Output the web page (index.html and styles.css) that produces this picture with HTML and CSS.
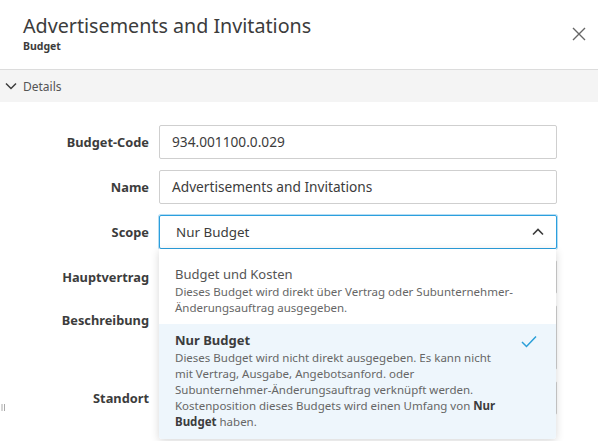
FILE: index.html
```html
<!DOCTYPE html>
<html lang="de">
<head>
<meta charset="utf-8">
<link rel="stylesheet" href="styles.css">
</head>
<body>
<div class="panel">
  <header class="header">
    <div class="titles">
      <div class="title">Advertisements and Invitations</div>
      <div class="subtitle">Budget</div>
    </div>
    <button class="close" aria-label="Close">
      <svg width="14" height="14" viewBox="0 0 14 14"><path d="M1 1L13 13M13 1L1 13" stroke="#666" stroke-width="1.4" fill="none"/></svg>
    </button>
  </header>
  <div class="section-bar">
    <svg class="chev" width="12" height="8" viewBox="0 0 12 8"><path d="M1 1.5L6 6.5L11 1.5" stroke="#3c3c3c" stroke-width="1.5" fill="none"/></svg>
    <span>Details</span>
  </div>
  <div class="form">
    <label class="label">Budget-Code</label>
    <div class="input">934.001100.0.029</div>

    <label class="label">Name</label>
    <div class="input">Advertisements and Invitations</div>

    <label class="label">Scope</label>
    <div class="select-wrap">
      <div class="select">
        <span>Nur Budget</span>
        <svg width="12" height="8" viewBox="0 0 12 8"><path d="M1 6.5L6 1.5L11 6.5" stroke="#3c3c3c" stroke-width="1.6" fill="none"/></svg>
      </div>
      <div class="menu">
        <div class="option">
          <div class="opt-title">Budget und Kosten</div>
          <div class="opt-desc">Dieses Budget wird direkt über Vertrag oder Subunternehmer-Änderungsauftrag ausgegeben.</div>
        </div>
        <div class="option selected">
          <div class="opt-title bold">Nur Budget</div>
          <div class="opt-desc">Dieses Budget wird nicht direkt ausgegeben. Es kann nicht mit Vertrag, Ausgabe, Angebotsanford. oder Subunternehmer-Änderungsauftrag verknüpft werden. Kostenposition dieses Budgets wird einen Umfang von <b>Nur Budget</b> haben.</div>
          <svg class="check" width="16" height="13" viewBox="0 0 16 13"><path d="M1 7L5.5 11.5L15 1.5" stroke="#2a9fd8" stroke-width="1.5" fill="none"/></svg>
        </div>
      </div>
    </div>

    <label class="label">Hauptvertrag</label>
    <div class="input"></div>

    <label class="label top">Beschreibung</label>
    <div class="input textarea"></div>

    <label class="label">Standort</label>
    <div class="input"></div>
  </div>
  <svg class="grip" width="5" height="7" viewBox="0 0 5 7"><path d="M1 0V7M3.5 0V7" stroke="#aaa" stroke-width="1"/></svg>
</div>
</body>
</html>
```

FILE: styles.css
```css
html, body {
  margin: 0;
  padding: 0;
  background: #fff;
}
body {
  font-family: "Noto Sans", Roboto, sans-serif;
  color: #3c3c3c;
  width: 598px;
  height: 441px;
  overflow: hidden;
}
.panel {
  position: relative;
  height: 441px;
}
.header {
  height: 70px;
  box-sizing: border-box;
  border-bottom: 1px solid #dcdcdc;
  padding: 13px 12px 0 23px;
  display: flex;
  justify-content: space-between;
  align-items: flex-start;
}
.title {
  font-size: 19.7px;
  line-height: 26px;
  color: #3c3c3c;
  font-weight: 400;
}
.subtitle {
  font-size: 10.5px;
  line-height: 14px;
  font-weight: 700;
  color: #3c3c3c;
}
.close {
  border: 0;
  background: none;
  padding: 0;
  margin-top: 14px;
  width: 14px;
  height: 14px;
  display: flex;
}
.section-bar {
  height: 32px;
  background: #f4f4f4;
  display: flex;
  align-items: center;
  padding-left: 5px;
  font-size: 12px;
  color: #555;
}
.chev {
  margin-right: 6px;
}
.form {
  display: grid;
  grid-template-columns: 149px 398px;
  column-gap: 10px;
  row-gap: 11px;
  padding-top: 23px;
}
.label {
  font-size: 12.8px;
  font-weight: 700;
  color: #3c3c3c;
  text-align: right;
  align-self: center;
}
.label.top {
  align-self: start;
  padding-top: 6px;
}
.input {
  height: 34px;
  box-sizing: border-box;
  border: 1px solid #cfcfcf;
  border-radius: 2px;
  font-size: 13.7px;
  line-height: 32px;
  padding: 0 12px;
  color: #3c3c3c;
}
.textarea {
  height: 65px;
}
.select-wrap {
  position: relative;
}
.select {
  height: 34px;
  box-sizing: border-box;
  border: 1px solid #2b9fde;
  box-shadow: 0 0 0 1px rgba(43,159,222,0.35);
  border-radius: 2px;
  display: flex;
  align-items: center;
  justify-content: space-between;
  padding: 0 12px 0 16px;
  font-size: 13.4px;
  color: #3c3c3c;
}
.menu {
  position: absolute;
  top: 34px;
  left: 0;
  width: 397px;
  background: #fff;
  box-shadow: 0 2px 8px rgba(0,0,0,0.16);
  border-radius: 0 0 3px 3px;
  z-index: 5;
}
.option {
  position: relative;
  padding: 16px 30px 8px 16px;
}
.option.selected {
  background: #eef6fc;
  padding: 7px 60px 9px 16px;
  border-radius: 0 0 3px 3px;
}
.opt-title {
  font-size: 13px;
  line-height: 18px;
  color: #555;
  margin-bottom: 1px;
}
.opt-title.bold {
  font-weight: 700;
  color: #3c3c3c;
}
.opt-desc {
  font-size: 11.5px;
  line-height: 16px;
  color: #666;
}
.opt-desc b {
  color: #3c3c3c;
}
.check {
  position: absolute;
  right: 19px;
  top: 11px;
}
.grip {
  position: absolute;
  left: 1px;
  top: 404px;
}
```
